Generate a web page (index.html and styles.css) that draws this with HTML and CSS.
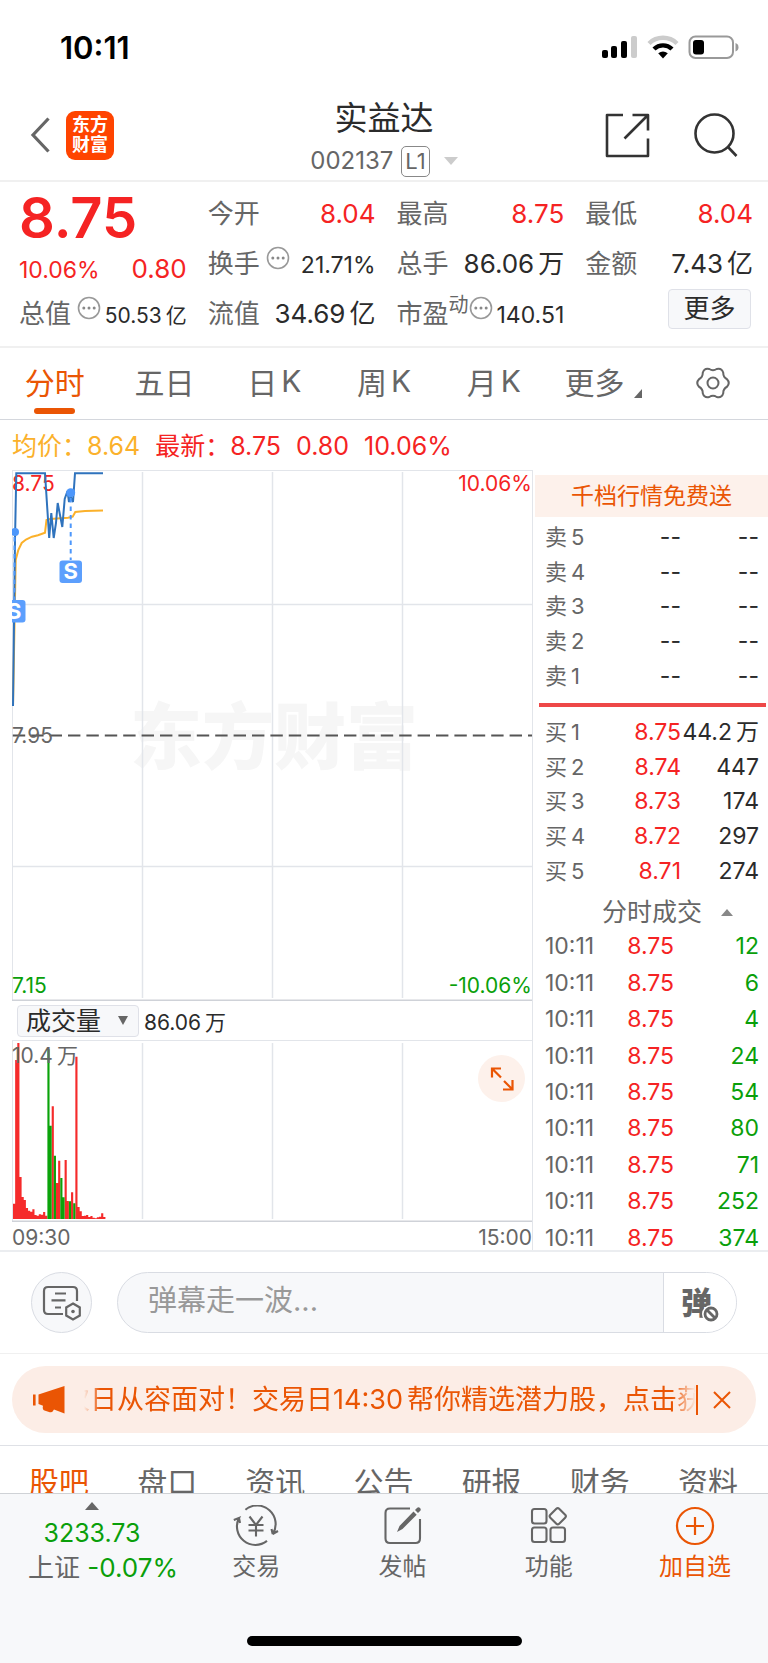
FILE: index.html
```html
<!DOCTYPE html>
<html lang="zh-CN">
<head>
<meta charset="utf-8">
<meta name="viewport" content="width=device-width, initial-scale=1">
<title>实益达 002137</title>
<link rel="stylesheet" href="styles.css">
</head>
<body>
<div class="status-bar">
  <span class="clock">10:11</span>
  <svg class="status-icons" width="137" height="24" viewBox="602 35 137 24" aria-hidden="true">
    <rect x="602" y="50" width="6" height="8" rx="2"/>
    <rect x="611" y="46" width="6" height="12" rx="2"/>
    <rect x="621" y="41" width="6" height="17" rx="2"/>
    <rect x="631" y="36" width="6" height="22" rx="2" fill="#ccc"/>
    <g fill="none" stroke-width="4.4">
      <path d="M649 43.5a20 20 0 0 1 28 0" stroke="#ccc"/>
      <path d="M654 49a13 13 0 0 1 18 0" stroke="#000"/>
    </g>
    <path d="M663 58.5l-4.8-5.2q4.8-3.6 9.600 0z"/>
    <rect x="689.500" y="36.500" width="43.500" height="21.500" rx="6" fill="none" stroke="#999" stroke-width="2"/>
    <rect x="693" y="40" width="11" height="14.500" rx="3"/>
    <path d="M735.500 43q3 1 3 4.200t-3 4.200z" fill="#999"/>
  </svg>
</div>

<header class="header">
  <div class="header-left">
    <button class="icon-btn" aria-label="返回">
      <svg width="22" height="38" viewBox="0 0 22 38"><path d="M18.500 2.500L3 19l15.500 16.500" fill="none" stroke="#666" stroke-width="3.200"/></svg>
    </button>
    <div class="logo"><span>东方</span><span>财富</span></div>
  </div>
  <div class="header-title">
    <h1>实益达</h1>
    <div class="code">
      <span>002137</span><span class="level">L1</span>
      <svg width="14" height="8" viewBox="0 0 14 8"><path d="M0 0h14L7 8z" fill="#ccc"/></svg>
    </div>
  </div>
  <div class="header-right">
    <button class="icon-btn" aria-label="分享">
      <svg width="45" height="45" viewBox="605.500 112.500 45 45" fill="none" stroke="#333" stroke-width="2.600" stroke-linejoin="round"><path d="M623.500 114.500H607.500V155.500H648.500V138M633 114.500h15.500V130M648.500 114.500L625 138"/></svg>
    </button>
    <button class="icon-btn" aria-label="搜索">
      <svg width="44" height="45" viewBox="693.500 112.500 44 45" fill="none" stroke="#333" stroke-width="2.600"><circle cx="714" cy="133" r="19"/><path d="M727.500 146.500l8.500 9"/></svg>
    </button>
  </div>
</header>

<section class="quote">
  <div class="cell price"><strong>8.75</strong></div>
  <div class="cell"><span class="key">今开</span><span class="val up">8.04</span></div>
  <div class="cell"><span class="key">最高</span><span class="val up">8.75</span></div>
  <div class="cell"><span class="key">最低</span><span class="val up">8.04</span></div>

  <div class="cell change"><span class="val small up">10.06%</span><span class="val up">0.80</span></div>
  <div class="cell"><span class="key">换手</span><svg class="dots" viewBox="0 0 24 24"><use href="#more-dots"/></svg><span class="val small">21.71%</span></div>
  <div class="cell"><span class="key">总手</span><span class="val">86.06<span class="unit">万</span></span></div>
  <div class="cell"><span class="key">金额</span><span class="val">7.43<span class="unit">亿</span></span></div>

  <div class="cell"><span class="key">总值</span><svg class="dots" viewBox="0 0 24 24"><use href="#more-dots"/></svg><span class="val tiny">50.53<span class="unit">亿</span></span></div>
  <div class="cell"><span class="key">流值</span><span class="val">34.69<span class="unit">亿</span></span></div>
  <div class="cell tight"><span class="key">市盈</span><span class="sup">动</span><svg class="dots" viewBox="0 0 24 24"><use href="#more-dots"/></svg><span class="val small">140.51</span></div>
  <div class="cell end"><button class="more-btn">更多</button></div>
</section>

<svg class="defs" width="0" height="0" aria-hidden="true">
  <symbol id="more-dots" viewBox="0 0 24 24"><circle cx="12" cy="12" r="10.500" fill="none" stroke="#999" stroke-width="1.600"/><g fill="#888"><circle cx="6.800" cy="12" r="1.500"/><circle cx="12" cy="12" r="1.500"/><circle cx="17.200" cy="12" r="1.500"/></g></symbol>
</svg>

<nav class="periods">
  <button class="active">分时</button>
  <button>五日</button>
  <button>日<span class="unit">K</span></button>
  <button>周<span class="unit">K</span></button>
  <button>月<span class="unit">K</span></button>
  <button>更多<svg class="corner" width="8" height="9" viewBox="0 0 8 9"><path d="M8 0v9H0z" fill="#666"/></svg></button>
  <button class="settings" aria-label="设置">
    <svg width="36" height="36" viewBox="-18 -18 36 36" fill="none" stroke="#666" stroke-width="2"><path d="M14-3.750Q17.500 0 14 3.750Q10.100 5.800 10.250 10.250Q8.750 15.200 3.750 14Q0 11.700-3.750 14Q-8.750 15.200-10.250 10.250Q-10.100 5.800-14 3.750Q-17.500 0-14-3.750Q-10.100-5.800-10.250-10.250Q-8.750-15.200-3.750-14Q0-11.700 3.750-14Q8.750-15.200 10.250-10.250Q10.100-5.800 14-3.750Z"/><circle r="5.500"/></svg>
  </button>
</nav>

<div class="summary">
  <span class="avg">均价：8.64</span><span class="latest">最新：8.75</span><span>0.80</span><span>10.06%</span>
</div>

<main class="market">
  <div class="charts">
    <svg class="chart" viewBox="12 470 520 531" role="img" aria-label="分时走势">
      <text class="watermark" x="130" y="763">东方财富</text>
      <g class="grid">
        <path d="M12 470.500H532M12.500 470V1000"/>
        <path d="M142.500 472V998M272.500 472V998M402.500 472V998" stroke-width="1.500"/>
        <path d="M12 604.500H532M12 866.500H532" stroke-width="1.500"/>
      </g>
      <path d="M12 1000.300H532" stroke="#cfd2d8" stroke-width="1.500"/>
      <path d="M12.800 735.500H532" stroke="#555" stroke-width="2" stroke-dasharray="12.400 6"/>
      <text class="label up" x="12" y="491">8.75</text>
      <text class="label up" x="532" y="491" text-anchor="end">10.06%</text>
      <text class="label mid" x="12" y="743">7.95</text>
      <text class="label down" x="12" y="993">7.15</text>
      <text class="label down" x="532" y="993" text-anchor="end">-10.06%</text>
      <path d="M13 706L15.700 560L18.300 550L21.700 543L26 539.500L32 536.700L38 535.300L45 532.700L46.500 520L50 519L68 517.700L72.700 516.700L75.300 512L85 511L103 510.500" fill="none" stroke="#fbb12b" stroke-width="2"/>
      <path d="M13 706L15 540L16.300 473.300H45L49.200 538L51.300 513L53.700 538L56 523L57.700 503L62.300 527L64.700 499L67.500 491L69 502L70.700 497L73 502L75 473.300H103" fill="none" stroke="#2f73bd" stroke-width="2"/>
      <g stroke="#4d97fb" stroke-width="2" stroke-dasharray="4.500 4"><path d="M70.700 498V560"/><path d="M14.500 537V600"/></g>
      <g fill="#4d97fb"><circle cx="70.700" cy="492.700" r="4.500"/><circle cx="15" cy="532" r="4"/></g>
      <g class="marker"><rect x="59.500" y="560.500" width="22.500" height="22.500" rx="3"/><text x="70.700" y="579">S</text></g>
      <g class="marker"><rect x="3" y="600" width="22.500" height="22.500" rx="3"/><text x="14.300" y="618.500">S</text></g>
    </svg>

    <div class="volume-head">
      <button class="indicator">成交量<svg width="10" height="9" viewBox="0 0 10 9"><path d="M0 0h10L5 9z" fill="#666"/></svg></button>
      <span>86.06<span class="unit">万</span></span>
    </div>

    <div class="volume">
      <svg class="chart" viewBox="12 1040 520 182" role="img" aria-label="成交量">
        <g class="grid">
          <path d="M12 1040.500H532M12.500 1040V1221"/>
          <path d="M142.500 1043V1219M272.500 1043V1219M402.500 1043V1219" stroke-width="1.500"/>
        </g>
        <path d="M12 1221.200H532" stroke="#cfd2d8" stroke-width="1.500"/>
        <g transform="translate(0 970) scale(.3333)">
          <path fill="#f52b2b" d="M39 747V701h6.450V270h6.450V219h6.450V621h6.450V681h6.450V690h6.450V714h6.450V722h6.450V725h6.450V718h6.450V735h6.450V737h6.450V733h6.450V734h6.450V726h6.450V737h6.450V747h12.900V409h6.450V747h6.450V639h6.450V572h6.450V747h12.900V570h6.450V693h6.450V747h6.450V667h6.450V747h6.450V260h6.450V711h6.450V724h6.450V738h6.450V737h6.450V735h6.450V741h6.450V738h6.450V743h6.450V745h6.450V742h6.450V740h6.450V730h6.450V741h6.450V747z"/>
          <path fill="#0aa30a" d="M142.200 747V238h6.450V467h6.450V747zM161.500 747V557h6.450V747zM180.900 747V624h6.450V682h6.450V747zM206.700 747V694h6.450V747zM219.600 747V700h6.450V747z"/>
        </g>
        <text class="label mid" x="12" y="1063">10.4<tspan dx="4">万</tspan></text>
      </svg>
      <button class="expand" aria-label="全屏">
        <svg width="24" height="24" viewBox="0 0 24 24" fill="none" stroke="#ea5504" stroke-width="2.200"><path d="M11 1.500H2v9M2 1.500l9 9M14 14l8 8M22.500 13v9.500H13"/></svg>
      </button>
    </div>
    <div class="axis"><span>09:30</span><span>15:00</span></div>
  </div>

  <aside class="book">
    <a class="promo" href="#">千档行情免费送</a>
    <table class="depth">
      <tr><th>卖<span class="unit">5</span></th><td>--</td><td>--</td></tr>
      <tr><th>卖<span class="unit">4</span></th><td>--</td><td>--</td></tr>
      <tr><th>卖<span class="unit">3</span></th><td>--</td><td>--</td></tr>
      <tr><th>卖<span class="unit">2</span></th><td>--</td><td>--</td></tr>
      <tr><th>卖<span class="unit">1</span></th><td>--</td><td>--</td></tr>
    </table>
    <div class="ratio"></div>
    <table class="depth">
      <tr><th>买<span class="unit">1</span></th><td class="up">8.75</td><td>44.2<span class="unit">万</span></td></tr>
      <tr><th>买<span class="unit">2</span></th><td class="up">8.74</td><td>447</td></tr>
      <tr><th>买<span class="unit">3</span></th><td class="up">8.73</td><td>174</td></tr>
      <tr><th>买<span class="unit">4</span></th><td class="up">8.72</td><td>297</td></tr>
      <tr><th>买<span class="unit">5</span></th><td class="up">8.71</td><td>274</td></tr>
    </table>
    <button class="trades-head">分时成交<svg width="12" height="7" viewBox="0 0 12 7"><path d="M0 7h12L6 0z" fill="#888"/></svg></button>
    <table class="trades">
      <tr><th>10:11</th><td class="up">8.75</td><td class="down">12</td></tr>
      <tr><th>10:11</th><td class="up">8.75</td><td class="down">6</td></tr>
      <tr><th>10:11</th><td class="up">8.75</td><td class="down">4</td></tr>
      <tr><th>10:11</th><td class="up">8.75</td><td class="down">24</td></tr>
      <tr><th>10:11</th><td class="up">8.75</td><td class="down">54</td></tr>
      <tr><th>10:11</th><td class="up">8.75</td><td class="down">80</td></tr>
      <tr><th>10:11</th><td class="up">8.75</td><td class="down">71</td></tr>
      <tr><th>10:11</th><td class="up">8.75</td><td class="down">252</td></tr>
      <tr><th>10:11</th><td class="up">8.75</td><td class="down">374</td></tr>
    </table>
  </aside>
</main>

<section class="danmaku">
  <button class="round-btn" aria-label="弹幕设置">
    <svg width="40" height="36" viewBox="43 1286 40 36" fill="none" stroke="#666" stroke-width="2.200"><path d="M78 1302V1292q0-4-4-4H49q-4 0-4 4v19q0 4 4 4h15M56 1294.500h11M52.500 1301.300h14M56 1308.500h6"/><path d="M74 1304.500l6.800 4v8l-6.800 4-6.800-4v-8z"/><circle cx="74" cy="1312.500" r="1.800" fill="#666" stroke="none"/></svg>
  </button>
  <div class="danmaku-box">
    <input type="text" placeholder="弹幕走一波..." aria-label="弹幕走一波">
    <button class="danmaku-toggle" aria-label="关闭弹幕"><span>弹</span>
      <svg class="ban" width="20" height="20" viewBox="-10 -10 20 20"><circle r="9" fill="#fff"/><circle r="6" fill="none" stroke="#666" stroke-width="2.800"/><path d="M-4-4l8 8" stroke="#666" stroke-width="2.800"/></svg>
    </button>
  </div>
</section>

<section class="notice-wrap">
  <div class="notice">
    <svg width="32" height="28" viewBox="0 0 32 28" fill="#ea5504"><path d="M0 8.500h2.600v11H0zM5.500 8.500L31.500 0v27.500L21 23.500q-1.500 3.500-5 2.500l-4.500-1.500q-2.500-1-1.500-4.800l-4.500-1.700z"/></svg>
    <p class="marquee"><span>次日从容面对！交易日14:30<span class="unit">帮</span>你精选潜力股，点击获</span></p>
    <button class="icon-btn close" aria-label="关闭">
      <svg width="18" height="18" viewBox="0 0 18 18"><path d="M1 1l16 16M17 1L1 17" stroke="#ea5504" stroke-width="2"/></svg>
    </button>
  </div>
</section>

<nav class="sections">
  <button class="active">股吧</button><button>盘口</button><button>资讯</button><button>公告</button><button>研报</button><button>财务</button><button>资料</button>
</nav>

<footer class="bottom">
  <div class="tools">
    <button class="index">
      <span class="index-value"><svg width="14" height="8" viewBox="0 0 14 8"><path d="M0 8h14L7 0z" fill="#666"/></svg>3233.73</span>
      <span class="index-name">上证<span class="down"> -0.07%</span></span>
    </button>
    <button class="tool">
      <svg width="46" height="42" viewBox="234 1505 46 42" fill="none" stroke="#666" stroke-width="2.100"><path d="M246.400 1509.700A18.500 18.500 0 0 1 273.700 1534L279 1531M273.700 1534L272.500 1529M268 1540.900A18.500 18.500 0 0 1 240 1518L234.800 1520M240 1518L241 1523"/><path d="M250.500 1516.500l6.500 8.500 6.500-8.500M257 1525v11.500M249.500 1525h15M249.500 1530.500h15"/></svg>
      <span>交易</span>
    </button>
    <button class="tool">
      <svg width="40" height="42" viewBox="384 1505 40 42" fill="none" stroke="#666" stroke-width="2.100"><path d="M411 1508.500H391q-4.500 0-4.500 4.500v25.500q0 4.500 4.500 4.500h25.500q4.500 0 4.500-4.500V1519"/><path d="M398 1532l2.500-6L414.500 1511.500l3.200 3.200L403.500 1529z M416 1510l2.200-2.200q1.500-1 2.800.2t.3 2.800L419 1513z" fill="#666" stroke="none"/></svg>
      <span>发帖</span>
    </button>
    <button class="tool">
      <svg width="40" height="42" viewBox="530 1505 40 42" fill="none" stroke="#666" stroke-width="2.100"><rect x="533" y="1509" width="14.500" height="14.500" rx="2.500"/><rect x="533" y="1527.500" width="14.500" height="14.500" rx="2.500"/><rect x="551.500" y="1527.500" width="14.500" height="14.500" rx="2.500"/><rect x="552.500" y="1510" width="12.500" height="12.500" rx="2" transform="rotate(45 558.750 1516.250)"/></svg>
      <span>功能</span>
    </button>
    <button class="tool add">
      <svg width="42" height="42" viewBox="-21 -21 42 42" fill="none" stroke="#ea5504" stroke-width="2.200"><circle r="18"/><path d="M-9 0H9M0-9V9"/></svg>
      <span>加自选</span>
    </button>
  </div>
  <div class="home-indicator"></div>
</footer>
</body>
</html>
```

FILE: styles.css
```css
:root {
  --red: #f52323;
  --green: #0a9f0a;
  --orange: #ea5504;
  --ink: #2b2b2b;
  --muted: #666;
  --line: #e2e5ea;
  --panel: #f7f8fa;
}

* { box-sizing: border-box; }

body {
  margin: 0;
  background: #fff;
  color: var(--ink);
  font-family: Inter, "Noto Sans CJK SC", sans-serif;
  font-size: 24px;
  font-weight: 380;
}

button {
  margin: 0;
  padding: 0;
  border: 0;
  background: none;
  color: inherit;
  font: inherit;
  cursor: pointer;
}

svg { display: block; flex: none; }
.defs { position: absolute; }
.up { color: var(--red); fill: var(--red); }
.down { color: var(--green); fill: var(--green); }
.unit { margin-left: 4px; }

/* status bar */
.status-bar {
  display: flex;
  align-items: center;
  justify-content: space-between;
  height: 90px;
  padding: 4px 29px 0 60px;
}
.clock { font-size: 31px; font-weight: 600; color: #000; }

/* header */
.header {
  display: grid;
  grid-template-columns: 1fr auto 1fr;
  height: 92px;
  padding: 0 30px;
  border-bottom: 2px solid #f0f0f0;
}
.header-left, .header-right { display: flex; align-items: center; }
.header-left { gap: 14px; }
.header-right { justify-content: flex-end; gap: 44px; }
.logo {
  display: flex;
  flex-direction: column;
  align-items: center;
  justify-content: center;
  width: 48px;
  height: 49px;
  border-radius: 9px;
  background: #ff4400;
  color: #fff;
  font-size: 18px;
  font-weight: 700;
  line-height: 20px;
}
.header-title { padding-top: 7px; text-align: center; }
.header-title h1 { margin: 0 0 6px; font-size: 33px; font-weight: 380; line-height: 42px; }
.code { display: flex; align-items: center; justify-content: center; gap: 8px; color: var(--muted); line-height: 32px; }
.level {
  padding: 0 3px;
  margin-right: 6px;
  border: 1px solid #888;
  border-radius: 5px;
  font-size: 22px;
  line-height: 29px;
}

/* quote */
.quote {
  display: grid;
  grid-template-columns: repeat(4, 1fr);
  grid-auto-rows: 50px;
  column-gap: 21px;
  padding: 7px 15px 7px 19px;
  border-bottom: 2px solid #f0f0f0;
}
.cell { display: flex; align-items: baseline; min-width: 0; white-space: nowrap; font-size: 26px; line-height: 50px; }
.key, .sup { color: var(--muted); }
.val { margin-left: auto; font-weight: 400; }
.small { font-size: 23px; }
.tiny { font-size: 21px; }
.price strong { color: var(--red); font-size: 56px; font-weight: 600; line-height: 58px; }
.change { padding-top: 5px; }
.change .val:first-child { margin-left: 0; }
.dots { width: 24px; height: 24px; align-self: flex-start; margin: 7px 0 0 6px; }
.sup { align-self: flex-start; font-size: 20px; line-height: 32px; }
.tight .dots { margin-left: 0; }
.end { align-items: flex-start; justify-content: flex-end; }
.more-btn {
  width: 83px;
  margin-right: 2px;
  border: 1px solid #dfe1e8;
  border-radius: 4px;
  background: var(--panel);
  font-size: 26px;
  line-height: 38px;
}

/* period tabs */
.periods {
  display: grid;
  grid-template-columns: repeat(7, 1fr);
  height: 72px;
  border-bottom: 1px solid #d4d7dd;
  color: var(--muted);
  font-size: 30px;
}
.periods button { position: relative; display: flex; align-items: center; justify-content: center; padding-bottom: 6px; }
.periods .settings { padding-bottom: 2px; }
.periods .active { color: var(--orange); }
.periods .active::after {
  content: "";
  position: absolute;
  bottom: 5px;
  width: 41px;
  height: 6px;
  border-radius: 3px;
  background: var(--orange);
}
.corner { margin: 26px 0 0 10px; }

.summary { display: flex; gap: 15px; padding: 0 12px; color: var(--red); font-size: 25px; line-height: 52px; height: 50px; }
.avg { color: #fbb12b; }

/* charts */
.market {
  display: grid;
  grid-template-columns: 533fr 235fr;
  border-bottom: 2px solid #ebedf0;
}
.charts { min-width: 0; padding-left: 12px; border-right: 1px solid var(--line); }
.chart { width: 100%; height: auto; font-size: 21px; }
.grid { fill: none; stroke: var(--line); }
.mid { fill: var(--muted); }
.watermark { fill: #f6f6f6; font-size: 72px; font-weight: 900; }
.marker rect { fill: #5c9ffd; }
.marker text { fill: #fff; font-size: 22px; font-weight: 700; text-anchor: middle; }
.volume-head { display: flex; align-items: center; gap: 5px; height: 39px; padding-left: 5px; font-size: 21px; }
.indicator {
  display: flex;
  align-items: center;
  gap: 17px;
  padding: 0 10px 0 8px;
  border: 1px solid #dfe1e8;
  border-radius: 4px;
  background: var(--panel);
  font-size: 25px;
  line-height: 30px;
}
.volume { position: relative; }
.expand {
  position: absolute;
  top: 15px;
  right: 7px;
  display: grid;
  place-items: center;
  width: 47px;
  height: 47px;
  border-radius: 50%;
  background: #fdf1eb;
}
.axis { display: flex; justify-content: space-between; height: 28px; color: var(--muted); font-size: 21px; line-height: 31px; }

/* order book */
.book { min-width: 0; height: 780px; padding-left: 2px; overflow: hidden; font-size: 23px; }
.promo {
  display: block;
  margin-top: 5px;
  background: #fdf1eb;
  color: var(--orange);
  font-size: 23px;
  line-height: 42px;
  text-align: center;
  text-decoration: none;
}
.depth, .trades { width: 100%; border-collapse: collapse; table-layout: fixed; line-height: 30px; }
.depth { height: 173px; margin-top: 3px; }
.depth th { font-size: 22px; }
.trades { height: 328px; }
.book th, .book td { padding: 0; text-align: right; white-space: nowrap; }
.book th { width: 70px; padding-left: 10px; color: var(--muted); font-weight: inherit; text-align: left; }
.depth td { width: 76px; }
.book td:last-child { width: auto; padding-right: 9px; }
.trades td { width: 69px; }
.ratio { height: 4px; margin: 10px 2px 8px 4px; background: #ee4848; }
.trades-head { display: flex; align-items: center; gap: 19px; padding: 8px 0 0 67px; color: var(--muted); font-size: 25px; line-height: 32px; }

/* comment bar */
.danmaku { display: flex; gap: 25px; padding: 20px 31px; border-bottom: 1px solid #f0f0f0; }
.round-btn {
  display: grid;
  place-items: center;
  flex: none;
  width: 61px;
  height: 61px;
  border: 1px solid #d9dce3;
  border-radius: 50%;
  background: var(--panel);
}
.danmaku-box {
  display: flex;
  flex: 1;
  min-width: 0;
  height: 61px;
  border: 1px solid #d9dce3;
  border-radius: 31px;
  overflow: hidden;
  background: var(--panel);
}
.danmaku-box input {
  flex: 1;
  min-width: 0;
  padding: 0 30px 5px;
  border: 0;
  outline: 0;
  background: none;
  color: var(--ink);
  font: inherit;
  font-size: 29px;
}
.danmaku-box input::placeholder { color: #999; opacity: 1; }
.danmaku-toggle {
  position: relative;
  width: 73px;
  border-left: 1px solid #d9dce3;
  background: #fff;
  color: var(--muted);
  font-size: 31px;
  font-weight: 900;
  text-align: left;
  padding: 0 0 4px 17px;
}
.ban { position: absolute; left: 37px; top: 31px; }

/* notice */
.notice-wrap { padding: 12px 12px; border-bottom: 1px solid #dfe1e6; }
.notice {
  display: flex;
  align-items: center;
  height: 67px;
  padding: 0 25px 0 21px;
  border-radius: 34px;
  background: #fcede6;
  color: var(--orange);
  font-size: 27px;
  line-height: 38px;
}
.marquee {
  display: flex;
  flex: 1;
  min-width: 0;
  margin: 0 0 0 19px;
  overflow: hidden;
  white-space: nowrap;
  -webkit-mask-image: linear-gradient(90deg, transparent, #000 16px, #000 calc(100% - 24px), transparent);
  mask-image: linear-gradient(90deg, transparent, #000 16px, #000 calc(100% - 24px), transparent);
}
.marquee > span { margin-left: -21px; }
.close { display: flex; align-items: center; height: 30px; padding-left: 15px; border-left: 2px solid var(--orange); }

/* content tabs */
.sections {
  display: flex;
  justify-content: space-between;
  height: 47px;
  padding: 16px 30px 0 29px;
  overflow: hidden;
  color: var(--muted);
  font-size: 30px;
  line-height: 40px;
}
.sections button { flex: none; height: 40px; }
.sections .active { color: var(--orange); }

/* bottom bar */
.bottom { position: relative; height: 170px; border-top: 1px solid #cfd2d6; background: var(--panel); color: var(--muted); }
.tools { display: grid; grid-template-columns: 183fr repeat(4, 146fr); }
.index { display: flex; flex-direction: column; padding: 8px 0 0 28px; font-size: 26px; line-height: 36px; text-align: left; white-space: nowrap; }
.index-value { display: flex; flex-direction: column; align-items: center; width: 128px; gap: 6px; color: var(--green); font-size: 25px; line-height: 34px; }
.tool { display: flex; flex-direction: column; align-items: center; gap: 3px; padding-top: 11px; line-height: 34px; }
.add { color: var(--orange); }
.home-indicator { position: absolute; bottom: 17px; left: 50%; width: 275px; height: 10px; margin-left: -137px; border-radius: 5px; background: #000; }
```
